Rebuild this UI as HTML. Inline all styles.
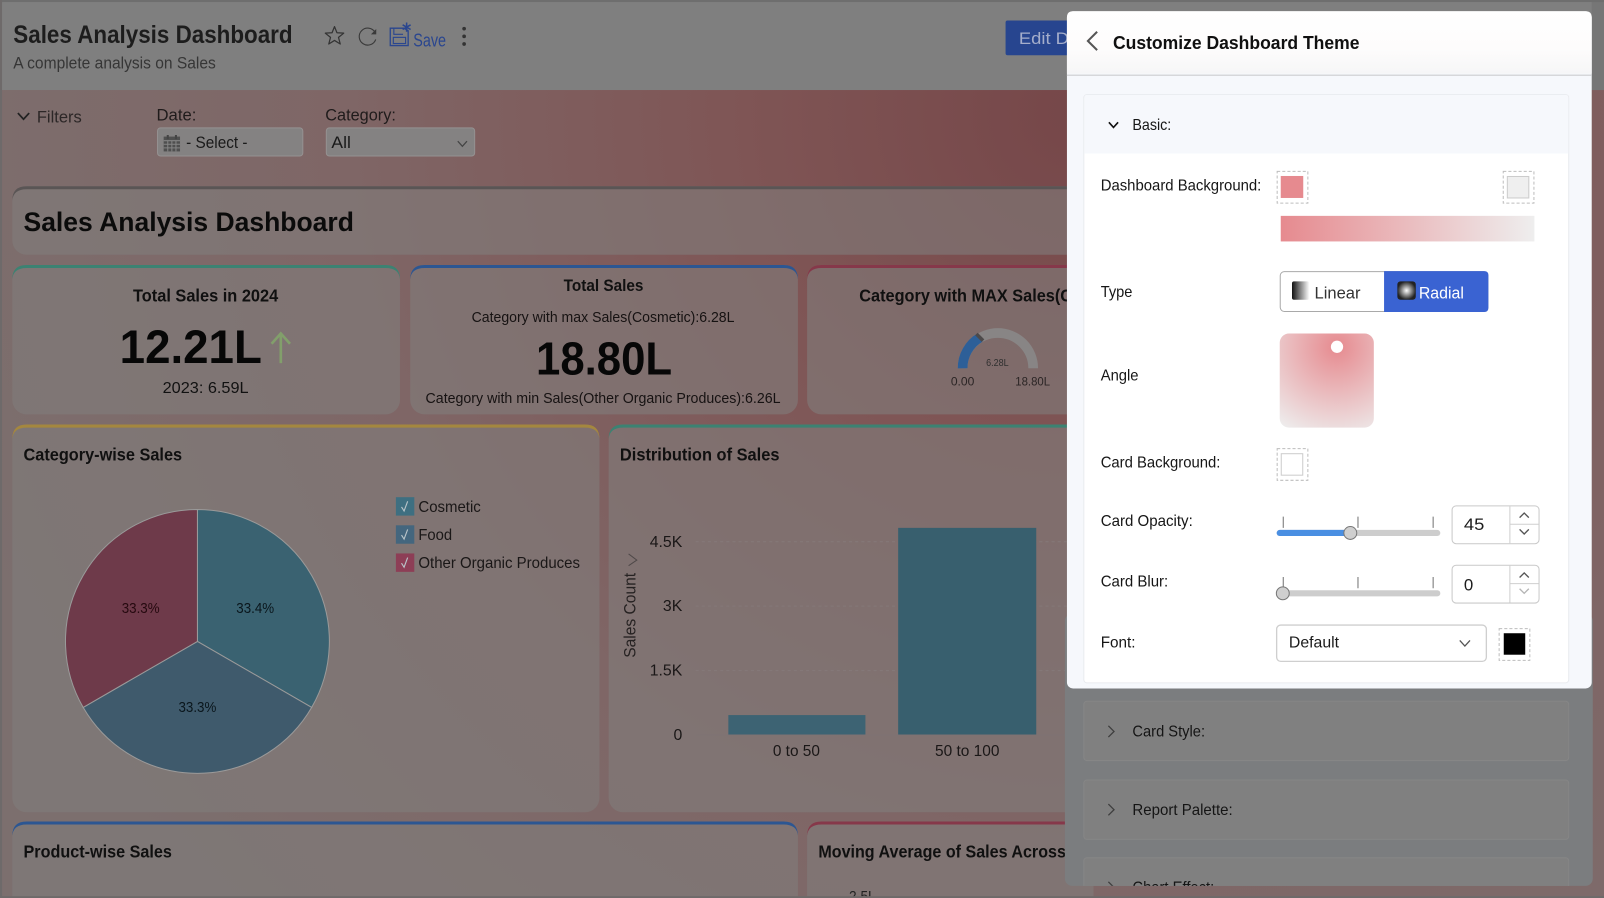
<!DOCTYPE html>
<html><head><meta charset="utf-8"><title>Sales Analysis Dashboard</title>
<style>
html,body{margin:0;padding:0;width:1604px;height:898px;overflow:hidden;background:#7d6b6b}
svg{display:block}
text{font-family:"Liberation Sans",sans-serif;white-space:pre}
.b{font-weight:bold}
</style></head><body>
<svg xmlns="http://www.w3.org/2000/svg" width="1604" height="898" viewBox="0 0 1568 877.8">
<defs>
<radialGradient id="bg" gradientUnits="userSpaceOnUse" cx="1050" cy="110" r="1150">
<stop offset="0" stop-color="#764749"/><stop offset=".28" stop-color="#7f5555"/><stop offset=".62" stop-color="#7f6666"/><stop offset="1" stop-color="#7c6f6e"/>
</radialGradient>
<linearGradient id="hdr" x1="0" y1="0" x2="0" y2="1"><stop offset="0" stop-color="#fff"/><stop offset=".6" stop-color="#fdfcfc"/><stop offset="1" stop-color="#f6f6f7"/></linearGradient>
<linearGradient id="bar" x1="0" y1="0" x2="1" y2="0"><stop offset="0" stop-color="#e68a8f"/><stop offset="1" stop-color="#eeeeee"/></linearGradient>
<linearGradient id="lin" x1="0" y1="0" x2="1" y2="0"><stop offset="0" stop-color="#111"/><stop offset="1" stop-color="#fff"/></linearGradient>
<radialGradient id="rad"><stop offset="0" stop-color="#fff"/><stop offset="1" stop-color="#222"/></radialGradient>
<radialGradient id="ang" gradientUnits="userSpaceOnUse" cx="1307" cy="339" r="95"><stop offset="0" stop-color="#e68a8f"/><stop offset="1" stop-color="#eeeeee"/></radialGradient>
<clipPath id="under"><rect x="1041" y="670" width="516" height="196"/></clipPath>
</defs>

<rect width="1568" height="878" fill="url(#bg)"/>
<!-- header -->
<rect x="0" y="0" width="1568" height="88" fill="#7f7f7f"/>
<rect x="1556" y="0" width="12" height="88" fill="#767676"/>
<rect x="0" y="0" width="1568" height="2" fill="#6e6e6e"/>
<rect x="0" y="0" width="2" height="878" fill="#6e6a6a"/>
<text class="b" x="13" y="42" font-size="24.5" fill="#1d1d1d" textLength="273" lengthAdjust="spacingAndGlyphs">Sales Analysis Dashboard</text>
<text x="13" y="67" font-size="16.5" fill="#363636" textLength="198" lengthAdjust="spacingAndGlyphs">A complete analysis on Sales</text>
<path d="M327 26 L329.4 32 L336 32.4 L330.9 36.5 L332.6 43 L327 39.5 L321.4 43 L323.1 36.5 L318 32.4 L324.6 32 Z" fill="none" stroke="#333" stroke-width="1.2" stroke-linejoin="round"/>
<path d="M366.6 31.5 A8.3 8.3 0 1 0 367.3 38.5" fill="none" stroke="#3a3a3a" stroke-width="1.1"/>
<path d="M367.8 28.3 L367.8 33.6 L362.6 33.6 Z" fill="#3a3a3a"/>
<path d="M381.5 27.5 H395 L399 30 V44.5 H381.5 Z" fill="none" stroke="#2a468f" stroke-width="1.3"/>
<rect x="384.5" y="36.5" width="12" height="6" fill="none" stroke="#2a468f" stroke-width="1.1"/>
<path d="M385 27.5 V33.5 H394" fill="none" stroke="#2a468f" stroke-width="1.1"/>
<path d="M397.5 22 V31 M393.6 24.2 L401.4 28.8 M401.4 24.2 L393.6 28.8" stroke="#2a468f" stroke-width="1.5"/>
<text x="404" y="45.500" font-size="18.500" fill="#2a468f" textLength="32" lengthAdjust="spacingAndGlyphs">Save</text>
<circle cx="453.7" cy="28" r="1.8" fill="#333"/><circle cx="453.7" cy="35.5" r="1.8" fill="#333"/><circle cx="453.7" cy="43" r="1.8" fill="#333"/>
<rect x="983" y="20" width="70" height="34" rx="2" fill="#27458f"/>
<text x="996" y="43" font-size="16.5" fill="#a5aecb" textLength="49" lengthAdjust="spacingAndGlyphs">Edit D</text>

<!-- filters -->
<path d="M17.5 110.5 L23 116.5 L28.5 110.5" fill="none" stroke="#222" stroke-width="1.7"/>
<text x="36" y="119.500" font-size="16.500" fill="#2c2727" textLength="44" lengthAdjust="spacingAndGlyphs">Filters</text>
<text x="153" y="118" font-size="16" fill="#1f1b1b" textLength="39" lengthAdjust="spacingAndGlyphs">Date:</text>
<text x="318" y="118" font-size="16" fill="#1f1b1b" textLength="69" lengthAdjust="spacingAndGlyphs">Category:</text>
<rect x="154" y="125" width="142" height="27.500" rx="3" fill="#848282" stroke="#959191" stroke-width="1"/>
<rect x="319" y="125" width="145" height="27.500" rx="3" fill="#848282" stroke="#959191" stroke-width="1"/>
<rect x="160" y="133.500" width="16" height="14.500" fill="#4f4f4f"/>
<path d="M160 137.500 H176 M160 141 H176 M160 144.500 H176 M164 137.500 V148 M168 137.500 V148 M172 137.500 V148" stroke="#858585" stroke-width="1"/>
<path d="M164 132 V136 M172 132 V136" stroke="#444" stroke-width="2"/>
<text x="182" y="144.500" font-size="16" fill="#1a1a1a" textLength="60" lengthAdjust="spacingAndGlyphs">- Select -</text>
<text x="324" y="144.500" font-size="16" fill="#1a1a1a" textLength="19" lengthAdjust="spacingAndGlyphs">All</text>
<path d="M447.5 138 L452 143 L456.5 138" fill="none" stroke="#444" stroke-width="1.2"/>

<!-- cards -->
<g fill="rgba(128,125,123,.6)">
<rect x="12" y="182" width="1060" height="67" rx="14"/>
<rect x="12" y="259" width="379" height="146" rx="14"/>
<rect x="401" y="259" width="379" height="146" rx="14"/>
<rect x="789" y="259" width="280" height="146" rx="14"/>
<rect x="12" y="415" width="574" height="379" rx="14"/>
<rect x="595" y="415" width="480" height="379" rx="14"/>
<rect x="12" y="803" width="768" height="90" rx="14"/>
<rect x="789" y="803" width="280" height="90" rx="14"/>
</g>
<!-- tapered top accents -->
<path fill="#5a5555" d="M12 196 Q12 182 26 182 H1072 V185 H26 Q13 185 12 196Z"/>
<path fill="#3c8272" d="M12 273 Q12 259 26 259 H377 Q391 259 391 273 Q390 262 377 262 H26 Q13 262 12 273Z"/>
<path fill="#2c5692" d="M401 273 Q401 259 415 259 H766 Q780 259 780 273 Q779 262 766 262 H415 Q402 262 401 273Z"/>
<path fill="#86384a" d="M789 273 Q789 259 803 259 H1072 V262 H803 Q790 262 789 273Z"/>
<path fill="#a4873f" d="M12 429 Q12 415 26 415 H572 Q586 415 586 429 Q585 418 572 418 H26 Q13 418 12 429Z"/>
<path fill="#3c8272" d="M595 429 Q595 415 609 415 H1072 V418 H609 Q596 418 595 429Z"/>
<path fill="#2c5692" d="M12 817 Q12 803 26 803 H766 Q780 803 780 817 Q779 806 766 806 H26 Q13 806 12 817Z"/>
<path fill="#86384a" d="M789 817 Q789 803 803 803 H1072 V806 H803 Q790 806 789 817Z"/>

<text class="b" x="23" y="226" font-size="26" fill="#0b0b0b" textLength="323" lengthAdjust="spacingAndGlyphs">Sales Analysis Dashboard</text>

<text class="b" x="130" y="294.500" font-size="17" fill="#101010" textLength="142" lengthAdjust="spacingAndGlyphs">Total Sales in 2024</text>
<text class="b" x="117" y="355" font-size="46" fill="#070707" textLength="139" lengthAdjust="spacingAndGlyphs">12.21L</text>
<path d="M274.5 355 V327 M265.5 336 L274.5 326 L283.5 336" fill="none" stroke="#829f6b" stroke-width="2.6"/>
<text x="159" y="384" font-size="15.5" fill="#111" textLength="84" lengthAdjust="spacingAndGlyphs">2023: 6.59L</text>

<text class="b" x="551" y="284.500" font-size="16.5" fill="#111" textLength="78" lengthAdjust="spacingAndGlyphs">Total Sales</text>
<text x="461" y="315" font-size="14.5" fill="#161212" textLength="257" lengthAdjust="spacingAndGlyphs">Category with max Sales(Cosmetic):6.28L</text>
<text class="b" x="524" y="366" font-size="45" fill="#070707" textLength="133" lengthAdjust="spacingAndGlyphs">18.80L</text>
<text x="416" y="394" font-size="14.5" fill="#161212" textLength="347" lengthAdjust="spacingAndGlyphs">Category with min Sales(Other Organic Produces):6.26L</text>

<text class="b" x="840" y="294.500" font-size="17" fill="#101010" textLength="208" lengthAdjust="spacingAndGlyphs">Category with MAX Sales(C</text>
<path d="M941 360 A34.5 34.5 0 0 1 1010 360" fill="none" stroke="#888585" stroke-width="9.500"/>
<path d="M941 360 A34.5 34.5 0 0 1 958 330" fill="none" stroke="#2d5f98" stroke-width="9.500"/>
<path d="M954.500 326.500 L961 333" stroke="#4d4a4a" stroke-width="3.500"/>
<text x="975" y="358" font-size="9.5" fill="#2f2f2f" text-anchor="middle" textLength="22" lengthAdjust="spacingAndGlyphs">6.28L</text>
<text x="929.500" y="377" font-size="12" fill="#2b2525" textLength="23" lengthAdjust="spacingAndGlyphs">0.00</text>
<text x="992.500" y="377" font-size="12" fill="#2b2525" textLength="34" lengthAdjust="spacingAndGlyphs">18.80L</text>

<text class="b" x="23" y="450" font-size="17" fill="#101010" textLength="155" lengthAdjust="spacingAndGlyphs">Category-wise Sales</text>
<text class="b" x="606" y="450" font-size="17" fill="#101010" textLength="156" lengthAdjust="spacingAndGlyphs">Distribution of Sales</text>

<!-- pie -->
<g stroke="#9a9a9a" stroke-width="1">
<path d="M193 627 L193 498 A129 129 0 0 1 304.700 691.500 Z" fill="#3a6271"/>
<path d="M193 627 L304.700 691.500 A129 129 0 0 1 81.300 691.500 Z" fill="#3f5a6c"/>
<path d="M193 627 L81.300 691.500 A129 129 0 0 1 193 498 Z" fill="#6e3a4a"/>
</g>
<text x="231" y="599" font-size="14" fill="#0a161c" textLength="37" lengthAdjust="spacingAndGlyphs">33.4%</text>
<text x="119" y="599" font-size="14" fill="#25090f" textLength="37" lengthAdjust="spacingAndGlyphs">33.3%</text>
<text x="174.500" y="696" font-size="14" fill="#0a161c" textLength="37" lengthAdjust="spacingAndGlyphs">33.3%</text>
<rect x="387" y="486" width="18" height="18" fill="#3e6f81"/><rect x="387" y="513.500" width="18" height="18" fill="#44667e"/><rect x="387" y="541" width="18" height="18" fill="#8d3e56"/>
<g fill="none" stroke="#b9c4c9" stroke-width="1.100">
<path d="M392.500 495.500 L395 499.500 L398.500 490"/><path d="M392.500 523 L395 527 L398.500 517.500"/><path d="M392.500 550.500 L395 554.500 L398.500 545"/>
</g>
<text x="409" y="500.500" font-size="15.500" fill="#1a1717" textLength="61" lengthAdjust="spacingAndGlyphs">Cosmetic</text>
<text x="409" y="528" font-size="15.500" fill="#1a1717" textLength="33" lengthAdjust="spacingAndGlyphs">Food</text>
<text x="409" y="555" font-size="15.500" fill="#1a1717" textLength="158" lengthAdjust="spacingAndGlyphs">Other Organic Produces</text>

<!-- bar chart -->
<g stroke="#847878" stroke-width="1" stroke-dasharray="3 3">
<path d="M680 529.500 H1043 M680 592.500 H1043 M680 655.500 H1043"/>
</g>
<path d="M680 718.500 H1043" stroke="#7e7373" stroke-width="1"/>
<rect x="712" y="699" width="134" height="19" fill="#3d6373"/>
<rect x="878" y="516" width="135" height="202" fill="#385f6e"/>
<g font-size="15.500" fill="#1a1717" text-anchor="end">
<text x="667" y="534.500">4.5K</text><text x="667" y="597.500">3K</text><text x="667" y="660.500">1.5K</text><text x="667" y="723.500">0</text>
</g>
<text x="755.500" y="739" font-size="15" fill="#1a1717" textLength="46" lengthAdjust="spacingAndGlyphs">0 to 50</text>
<text x="914" y="739" font-size="15" fill="#1a1717" textLength="63" lengthAdjust="spacingAndGlyphs">50 to 100</text>
<text transform="translate(621,643) rotate(-90)" font-size="16" fill="#262222" textLength="83" lengthAdjust="spacingAndGlyphs">Sales Count</text>
<path d="M614.500 541.500 L622.500 547.500 L614.500 553" fill="none" stroke="#4f4949" stroke-width="1"/>

<text class="b" x="23" y="838" font-size="17" fill="#101010" textLength="145" lengthAdjust="spacingAndGlyphs">Product-wise Sales</text>
<text class="b" x="800" y="838" font-size="17" fill="#101010" textLength="242" lengthAdjust="spacingAndGlyphs">Moving Average of Sales Across</text>
<text x="830" y="881" font-size="14" fill="#222" textLength="26" lengthAdjust="spacingAndGlyphs">2.5L</text>
<rect x="0" y="876" width="1568" height="2" fill="#6e6a6a"/>

<!-- underlay of panel -->
<rect x="1041" y="600" width="516" height="266" rx="7" fill="#7b7d7f"/>
<g clip-path="url(#under)">
<rect x="1059.500" y="685.500" width="474" height="58" rx="3" fill="#808080" stroke="#868686"/>
<rect x="1059.500" y="762.500" width="474" height="58" rx="3" fill="#808080" stroke="#868686"/>
<rect x="1059.500" y="838.500" width="474" height="58" rx="3" fill="#808080" stroke="#868686"/>
<g fill="none" stroke="#3f3f3f" stroke-width="1.300">
<path d="M1083.500 709.500 L1089 715 L1083.500 720.500"/><path d="M1083.500 786 L1089 791.500 L1083.500 797"/><path d="M1083.500 862 L1089 867.500 L1083.500 873"/>
</g>
<g font-size="15" fill="#151515">
<text x="1107" y="720" textLength="71" lengthAdjust="spacingAndGlyphs">Card Style:</text>
<text x="1107" y="796.500" textLength="98" lengthAdjust="spacingAndGlyphs">Report Palette:</text>
<text x="1107" y="872.500" textLength="80" lengthAdjust="spacingAndGlyphs">Chart Effect:</text>
</g>
</g>

<!-- panel -->
<rect x="1043" y="11" width="513" height="662" rx="6" fill="#f6f8fc"/>
<path d="M1043 72 V17 Q1043 11 1049 11 H1550 Q1556 11 1556 17 V72 Z" fill="url(#hdr)"/>
<path d="M1043 73.500 H1556" stroke="#d6d7da" stroke-width="1.500"/>
<path d="M1072.500 31 L1063.500 40 L1072.500 49" fill="none" stroke="#555" stroke-width="2"/>
<text class="b" x="1088" y="48" font-size="18.500" fill="#101010" textLength="241" lengthAdjust="spacingAndGlyphs">Customize Dashboard Theme</text>

<rect x="1059.500" y="92.500" width="474" height="575" rx="3" fill="#fff" stroke="#e9ebef"/>
<path d="M1060 150 V95 Q1060 93 1062 93 H1531 Q1533 93 1533 95 V150 Z" fill="#f6f8fc"/>
<path d="M1084 119.500 L1088.500 124.500 L1093 119.500" fill="none" stroke="#111" stroke-width="1.600"/>
<g font-size="15" fill="#161616">
<text x="1107" y="127" textLength="38" lengthAdjust="spacingAndGlyphs">Basic:</text>
<text x="1076" y="186" textLength="157" lengthAdjust="spacingAndGlyphs">Dashboard Background:</text>
<text x="1076" y="290.500" textLength="31" lengthAdjust="spacingAndGlyphs">Type</text>
<text x="1076" y="372" textLength="37" lengthAdjust="spacingAndGlyphs">Angle</text>
<text x="1076" y="457" textLength="117" lengthAdjust="spacingAndGlyphs">Card Background:</text>
<text x="1076" y="514" textLength="90" lengthAdjust="spacingAndGlyphs">Card Opacity:</text>
<text x="1076" y="573.500" textLength="66" lengthAdjust="spacingAndGlyphs">Card Blur:</text>
<text x="1076" y="633" textLength="34" lengthAdjust="spacingAndGlyphs">Font:</text>
</g>
<g fill="none" stroke="#bdbdbd" stroke-width="1" stroke-dasharray="3 2">
<rect x="1248.500" y="167.500" width="30" height="31"/>
<rect x="1469.500" y="167.500" width="30" height="31"/>
<rect x="1248.500" y="438.500" width="30" height="31"/>
<rect x="1465.500" y="614.500" width="30" height="31"/>
</g>
<rect x="1252" y="172" width="22" height="21.500" fill="#e68a8f"/>
<rect x="1473.500" y="172.500" width="21" height="21" fill="#efefef" stroke="#ccc"/>
<rect x="1252" y="211" width="248" height="25" fill="url(#bar)"/>

<!-- type toggle -->
<rect x="1251.500" y="265.500" width="203" height="39" rx="4" fill="#fff" stroke="#a9a9a9"/>
<path d="M1353 265 H1451 Q1455 265 1455 269 V301 Q1455 305 1451 305 H1353 Z" fill="#3a63d2"/>
<rect x="1263" y="275" width="17" height="18" rx="2" fill="url(#lin)"/>
<rect x="1366" y="275" width="18" height="18" rx="3" fill="url(#rad)"/>
<text x="1285" y="292" font-size="16" fill="#333" textLength="45" lengthAdjust="spacingAndGlyphs">Linear</text>
<text x="1387" y="292" font-size="16" fill="#fff" textLength="44" lengthAdjust="spacingAndGlyphs">Radial</text>

<!-- angle -->
<rect x="1251" y="326" width="92" height="92" rx="9" fill="url(#ang)"/>
<circle cx="1307" cy="339" r="6" fill="#fff"/>

<rect x="1252.500" y="443.500" width="21" height="21" fill="#fff" stroke="#ccc"/>

<!-- sliders -->
<path d="M1254.500 505 V516 M1327.500 505 V516 M1401 505 V516 M1254.500 564 V575 M1327.500 564 V575 M1401 564 V575" stroke="#8a8a8a" stroke-width="1.200"/>
<rect x="1248" y="518" width="160" height="6" rx="3" fill="#cdcdcd"/>
<rect x="1248" y="518" width="72" height="6" rx="3" fill="#4a8fe2"/>
<circle cx="1320" cy="521" r="6.300" fill="#cfcfcf" stroke="#777"/>
<rect x="1248" y="577" width="160" height="6" rx="3" fill="#cdcdcd"/>
<circle cx="1254" cy="580" r="6.300" fill="#cfcfcf" stroke="#777"/>

<!-- number boxes -->
<g fill="#fff" stroke="#c9c9c9"><rect x="1419.500" y="494.500" width="85" height="37" rx="4"/><rect x="1419.500" y="552.500" width="85" height="37" rx="4"/></g>
<path d="M1476 495 V531 M1476 512.500 H1504 M1476 553 V589 M1476 570.500 H1504" stroke="#cfcfcf"/>
<text x="1431" y="518" font-size="16.500" fill="#1c1c1c" textLength="20" lengthAdjust="spacingAndGlyphs">45</text>
<text x="1431" y="577" font-size="16.500" fill="#1c1c1c">0</text>
<g fill="none" stroke="#555" stroke-width="1.300">
<path d="M1485.500 506 L1490 501.500 L1494.500 506"/><path d="M1485.500 517.500 L1490 522 L1494.500 517.500"/><path d="M1485.500 564.500 L1490 560 L1494.500 564.500"/>
</g>
<path d="M1485.500 575.500 L1490 580 L1494.500 575.500" fill="none" stroke="#b5b5b5" stroke-width="1.300"/>

<!-- font -->
<rect x="1248" y="611" width="205" height="35.500" rx="4" fill="#fff" stroke="#cfcfcf" stroke-width="1.300"/>
<text x="1260" y="633" font-size="15.500" fill="#1a1a1a" textLength="49" lengthAdjust="spacingAndGlyphs">Default</text>
<path d="M1427 626 L1432 631.500 L1437 626" fill="none" stroke="#555" stroke-width="1.300"/>
<rect x="1470" y="619" width="21" height="21" fill="#000"/>
</svg>
</body></html>
